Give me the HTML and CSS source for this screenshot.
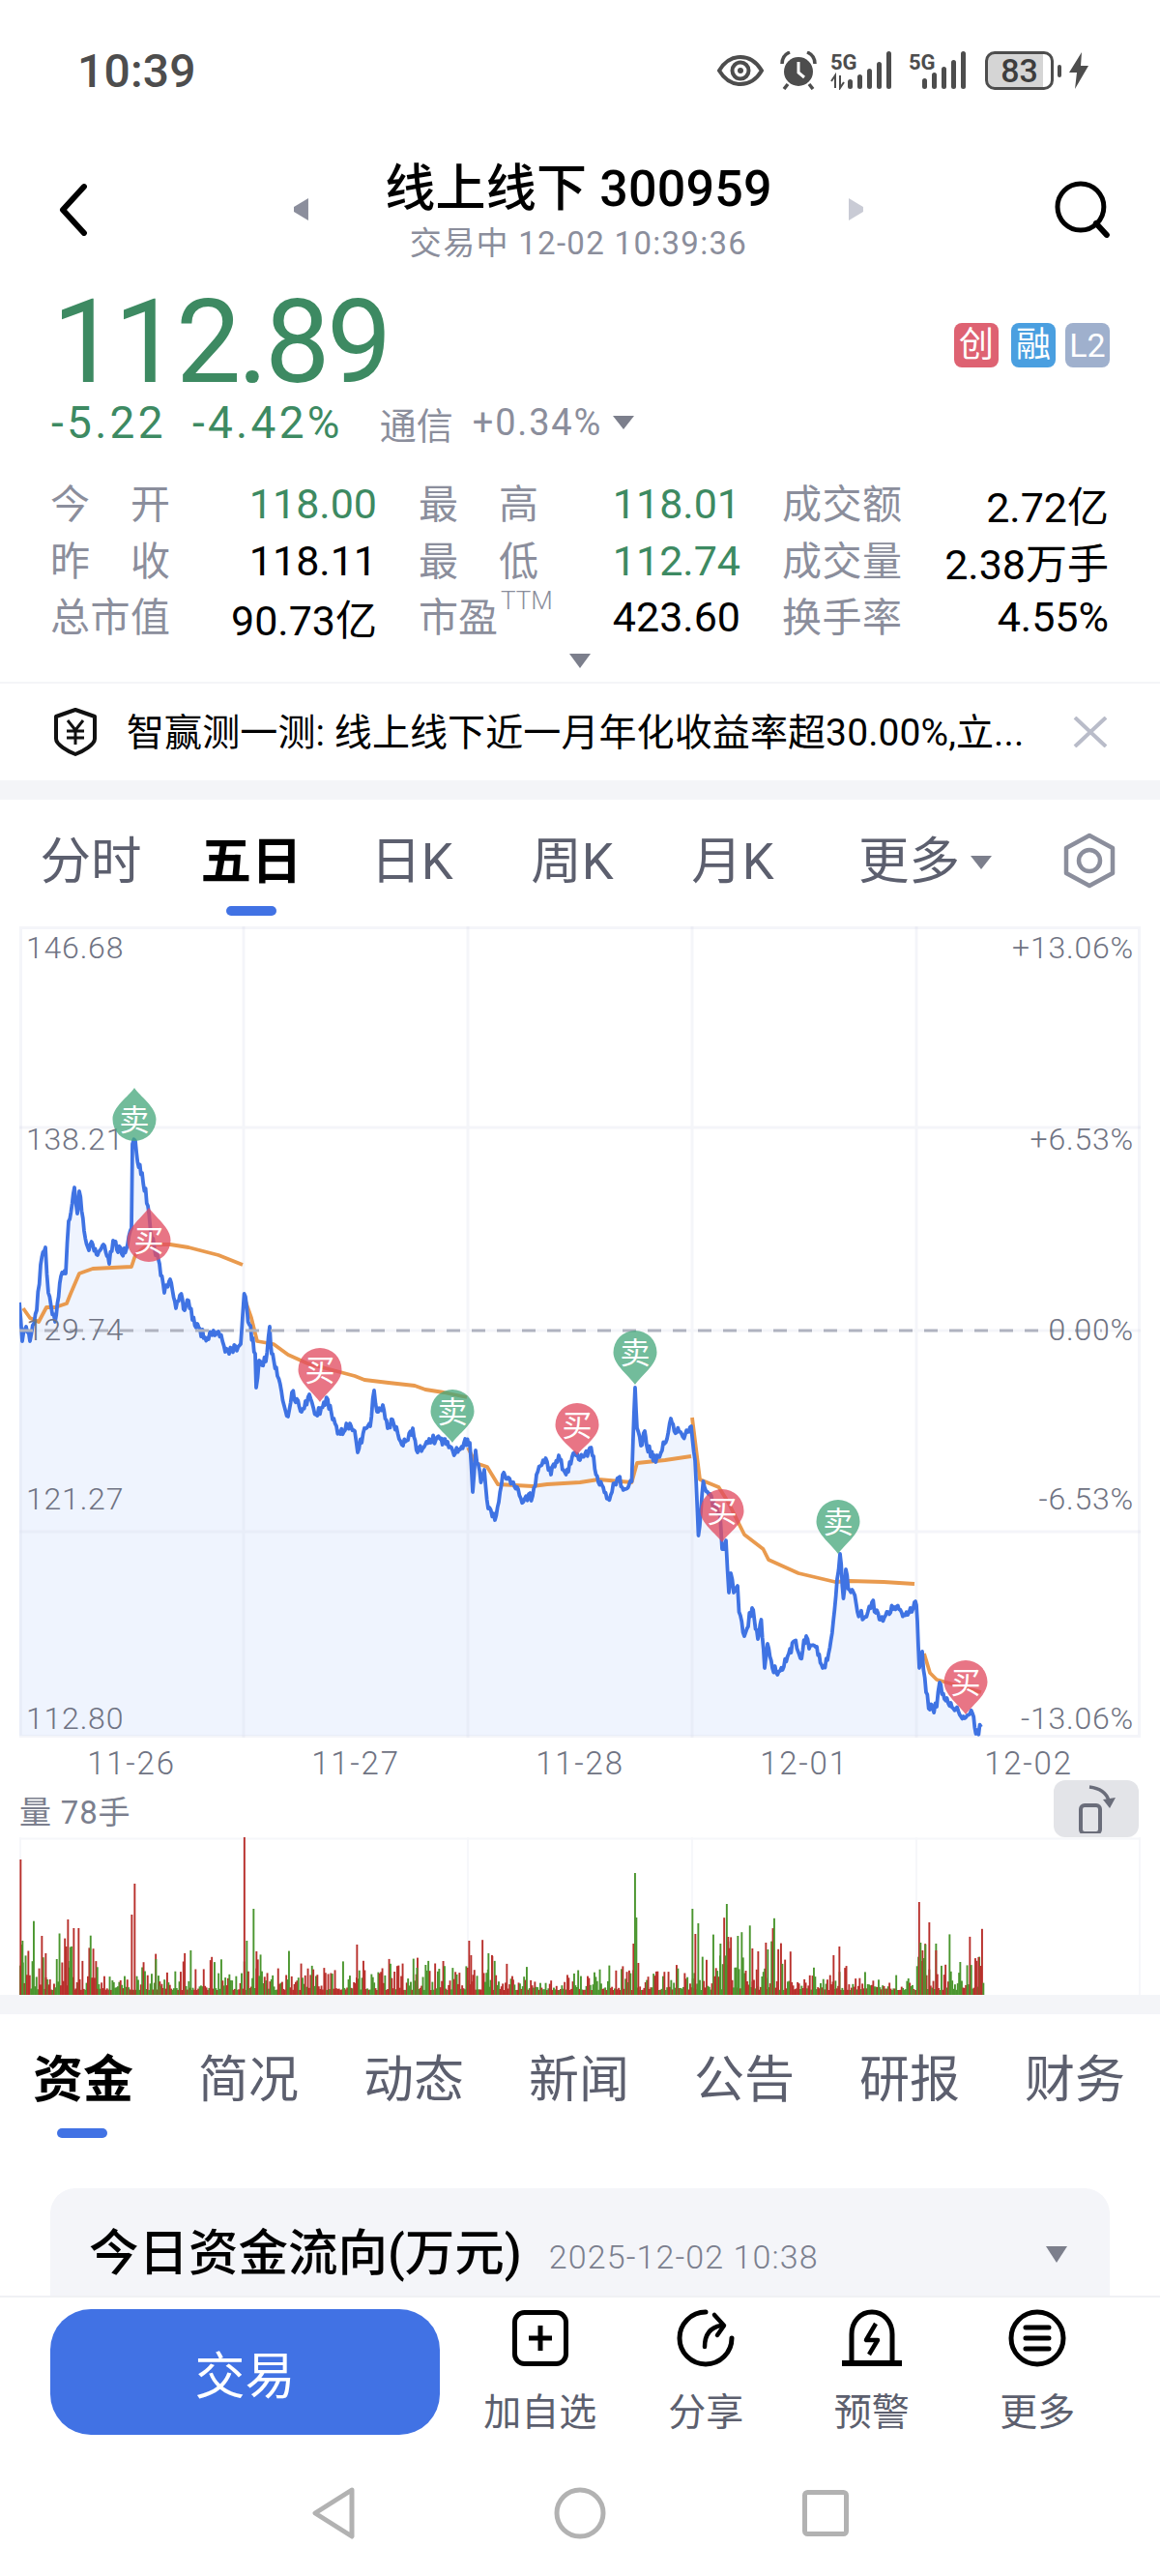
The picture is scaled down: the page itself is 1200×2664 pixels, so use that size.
FILE: index.html
```html
<!DOCTYPE html>
<html lang="zh-CN">
<head>
<meta charset="utf-8">
<title>线上线下 300959</title>
<link rel="stylesheet" href="styles.css">
</head>
<body>
<div class="page">
  <div class="scroll">
    <div class="status">
      <span class="clock">10:39</span>
      <div class="status-icons">
        <svg class="ic-eye" width="48" height="32" viewBox="0 0 48 32"><path d="M2 16C8 6 15 2 24 2s16 4 22 14c-6 10-13 14-22 14S8 26 2 16Z" fill="none" stroke="#4d4d4d" stroke-width="4"/><circle cx="24" cy="16" r="8.5" fill="none" stroke="#4d4d4d" stroke-width="4"/><circle cx="24" cy="16" r="3" fill="#4d4d4d"/></svg>
        <svg class="ic-alarm" width="38" height="40" viewBox="0 0 38 40"><circle cx="19" cy="21" r="15" fill="#4d4d4d"/><path d="M2 13C2 7 5 3 10 1M36 13c0-6-3-10-8-12M8 34l-4 5M30 34l4 5" fill="none" stroke="#4d4d4d" stroke-width="3.5"/><path d="M19 11v11l6 5" fill="none" stroke="#fff" stroke-width="3"/></svg>
        <svg class="ic-sim" width="66" height="40" viewBox="0 0 66 40"><text class="sim-label" x="0" y="19">5G</text><path d="M5 38V25l-4 6M10 25v13l4-6" fill="none" stroke="#4d4d4d" stroke-width="2"/><rect x="18" y="29" width="5" height="10" rx="2.5" class="sim-bar"/><rect x="28" y="24" width="5" height="15" rx="2.5" class="sim-bar"/><rect x="38" y="18" width="5" height="21" rx="2.5" class="sim-bar"/><rect x="48" y="11" width="5" height="28" rx="2.5" class="sim-bar"/><rect x="58" y="0" width="5" height="39" rx="2.5" class="sim-bar"/></svg>
        <svg class="ic-sim2" width="61" height="40" viewBox="0 0 61 40"><text class="sim-label" x="0" y="19">5G</text><rect x="14" y="28" width="5" height="11" rx="2.5" class="sim-bar"/><rect x="24" y="22" width="5" height="17" rx="2.5" class="sim-bar"/><rect x="34" y="16" width="5" height="23" rx="2.5" class="sim-bar"/><rect x="44" y="9" width="5" height="30" rx="2.5" class="sim-bar"/><rect x="54" y="0" width="5" height="39" rx="2.5" class="sim-bar"/></svg>
        <div class="battery"><span class="battery-level">83</span></div>
        <span class="battery-nub"></span>
        <svg class="ic-bolt" width="20" height="38" viewBox="0 0 20 38"><path d="M13 0 0 21h8L6 38 20 14h-8Z" fill="#4d4d4d"/></svg>
      </div>
    </div>

    <header class="head">
      <svg class="ic-back" width="30" height="54" viewBox="0 0 30 54"><path d="M26 3 4 27l22 24" fill="none" stroke="#000" stroke-width="6" stroke-linecap="round" stroke-linejoin="round"/></svg>
      <svg class="step" width="15" height="23" viewBox="0 0 15 23"><path d="M15 0v23L0 14V9Z" fill="#8b8e9c"/></svg>
      <div class="title-block">
        <div class="title">线上线下 300959</div>
        <div class="subtitle">交易中 12-02 10:39:36</div>
      </div>
      <svg class="step" width="15" height="23" viewBox="0 0 15 23"><path d="M0 0v23l15-9V9Z" fill="#c9cbd5"/></svg>
      <svg class="ic-search" width="60" height="60" viewBox="0 0 60 60"><circle cx="28" cy="27" r="24" fill="none" stroke="#000" stroke-width="5"/><path d="m44 44 11 12" fill="none" stroke="#000" stroke-width="6" stroke-linecap="round"/></svg>
    </header>

    <section class="quote">
      <div class="price-row">
        <div class="price">112.89</div>
        <div class="badges">
          <span class="badge badge-red">创</span>
          <span class="badge badge-blue">融</span>
          <span class="badge badge-slate">L2</span>
        </div>
      </div>
      <div class="change-row">
        <span class="chg">-5.22</span>
        <span class="chg">-4.42%</span>
        <span class="sector">通信</span>
        <span class="sector-chg">+0.34%</span>
        <span class="tri tri-sm"></span>
      </div>
      <div class="stats">
        <div class="stat"><span class="k">今 开</span><span class="v up">118.00</span></div>
        <div class="stat"><span class="k">最 高</span><span class="v up">118.01</span></div>
        <div class="stat"><span class="k">成交额</span><span class="v">2.72亿</span></div>
        <div class="stat"><span class="k">昨 收</span><span class="v">118.11</span></div>
        <div class="stat"><span class="k">最 低</span><span class="v up">112.74</span></div>
        <div class="stat"><span class="k">成交量</span><span class="v">2.38万手</span></div>
        <div class="stat"><span class="k">总市值</span><span class="v">90.73亿</span></div>
        <div class="stat"><span class="k k-pe">市盈<sup class="ttm">TTM</sup></span><span class="v">423.60</span></div>
        <div class="stat"><span class="k">换手率</span><span class="v">4.55%</span></div>
      </div>
      <div class="expand"><span class="tri tri-md"></span></div>
    </section>

    <div class="notice">
      <svg class="ic-shield" width="46" height="50" viewBox="0 0 46 50"><path d="M23 2 43 9v23c0 6-12 13-20 16C15 45 3 38 3 32V9Z" fill="none" stroke="#111" stroke-width="4" stroke-linejoin="round"/><path d="m15 13 8 10 8-10M14 24h18M14 31h18M23 23v15" fill="none" stroke="#111" stroke-width="3"/></svg>
      <span class="notice-text">智赢测一测: 线上线下近一月年化收益率超30.00%,立...</span>
      <svg class="ic-close" width="36" height="32" viewBox="0 0 36 32"><path d="M2 1l32 30M34 1 2 31" fill="none" stroke="#b9bcc9" stroke-width="4"/></svg>
    </div>
    <div class="band"></div>

    <nav class="period">
      <div class="period-tabs">
        <div class="ptab">分时</div>
        <div class="ptab on">五日<i class="bar"></i></div>
        <div class="ptab">日K</div>
        <div class="ptab">周K</div>
        <div class="ptab">月K</div>
        <div class="ptab ptab-more">更多<span class="tri tri-sm"></span></div>
      </div>
      <svg class="ic-hex" width="56" height="58" viewBox="0 0 56 58"><path d="M28 3 52 16v26L28 55 4 42V16Z" fill="none" stroke="#8b8e9c" stroke-width="4.5" stroke-linejoin="round"/><circle cx="28" cy="29" r="11" fill="none" stroke="#8b8e9c" stroke-width="4.5"/></svg>
    </nav>

    <svg class="price-chart" width="1160" height="839" viewBox="20 958 1160 839">
      <path id="area" class="area"/>
      <g class="grid">
        <rect x="21.5" y="959.5" width="1157" height="836"/>
        <path d="M252 958V1797M484 958V1797M716 958V1797M948 958V1797M20 1166H1180M20 1376H1180M20 1584H1180"/>
      </g>
      <path id="vwap" class="vwap"/>
      <path id="trace" class="trace"/>
      <path class="prev-close" d="M20 1376H1140"/>
      <g class="axis">
        <text x="27" y="991">146.68</text>
        <text x="27" y="1189">138.21</text>
        <text x="27" y="1386">129.74</text>
        <text x="27" y="1561">121.27</text>
        <text x="27" y="1788">112.80</text>
      </g>
      <g class="axis axis-r">
        <text x="1173" y="991">+13.06%</text>
        <text x="1173" y="1189">+6.53%</text>
        <text x="1173" y="1386">0.00%</text>
        <text x="1173" y="1561">-6.53%</text>
        <text x="1173" y="1788">-13.06%</text>
      </g>
      <g id="marks"></g>
    </svg>

    <div class="dates">
      <span>11-26</span><span>11-27</span><span>11-28</span><span>12-01</span><span>12-02</span>
    </div>

    <div class="vol-head">
      <span class="vol-label">量 78手</span>
      <button class="rotate" type="button" aria-label="横屏">
        <svg width="44" height="50" viewBox="0 0 44 50"><rect x="6" y="21" width="20" height="29" rx="4" fill="none" stroke="#6a6d7a" stroke-width="4"/><path d="M15 2c9 1 17 5 20 14" fill="none" stroke="#6a6d7a" stroke-width="3.5"/><path d="m29 15 7 9 6-11Z" fill="#6a6d7a"/></svg>
      </button>
    </div>
    <svg class="vol-chart" width="1160" height="163" viewBox="20 1900 1160 163">
      <g class="grid grid-thin">
        <path d="M20 1901.5H1180M21 1900V2063M252 1900V2063M484 1900V2063M716 1900V2063M948 1900V2063M1179 1900V2063"/>
      </g>
      <g id="bars"></g>
    </svg>
    <div class="band"></div>

    <nav class="sections">
      <div class="stab on">资金<i class="bar"></i></div>
      <div class="stab">简况</div>
      <div class="stab">动态</div>
      <div class="stab">新闻</div>
      <div class="stab">公告</div>
      <div class="stab">研报</div>
      <div class="stab">财务</div>
    </nav>

    <section class="card">
      <h2 class="card-title">今日资金流向(万元)</h2>
      <span class="card-time">2025-12-02 10:38</span>
      <span class="tri tri-lg"></span>
    </section>
  </div>

  <footer class="dock">
    <button class="trade" type="button">交易</button>
    <div class="tools">
      <div class="tool">
        <svg width="60" height="60" viewBox="0 0 60 60"><rect x="3.5" y="3.5" width="53" height="53" rx="10" fill="none" stroke="#000" stroke-width="5"/><path d="M30 17v26M18 30h24" stroke="#000" stroke-width="5"/></svg>
        <span>加自选</span>
      </div>
      <div class="tool">
        <svg width="60" height="60" viewBox="0 0 60 60"><path d="M30 3A27 27 0 1 0 57 30" fill="none" stroke="#000" stroke-width="5" stroke-linecap="round"/><path d="M29 39c0-12 5-20 17-22" fill="none" stroke="#000" stroke-width="4.5" stroke-linecap="round"/><path d="m39 6 10 11-7 10" fill="none" stroke="#000" stroke-width="4.5" stroke-linecap="round" stroke-linejoin="round"/></svg>
        <span>分享</span>
      </div>
      <div class="tool">
        <svg width="64" height="60" viewBox="0 0 64 60"><path d="M11 55V26C11 13 20 3 32 3s21 10 21 23v29" fill="none" stroke="#000" stroke-width="5"/><path d="M1 56h62" stroke="#000" stroke-width="6"/><path d="M36 15 26 32h12l-9 15" fill="none" stroke="#000" stroke-width="4.5" stroke-linejoin="round"/></svg>
        <span>预警</span>
      </div>
      <div class="tool">
        <svg width="60" height="60" viewBox="0 0 60 60"><circle cx="30" cy="30" r="27" fill="none" stroke="#000" stroke-width="5"/><path d="M18 19h24M18 30h24M18 41h24" stroke="#000" stroke-width="5" stroke-linecap="round"/></svg>
        <span>更多</span>
      </div>
    </div>
  </footer>

  <div class="gesture">
    <svg width="46" height="54" viewBox="0 0 46 54"><path d="M42 3 4 27l38 24Z" fill="none" stroke="#b2b2b2" stroke-width="5" stroke-linejoin="round"/></svg>
    <svg width="54" height="54" viewBox="0 0 54 54"><circle cx="27" cy="27" r="24" fill="none" stroke="#b2b2b2" stroke-width="5"/></svg>
    <svg width="48" height="48" viewBox="0 0 48 48"><rect x="2.5" y="2.5" width="43" height="43" rx="3" fill="none" stroke="#b2b2b2" stroke-width="5"/></svg>
  </div>
</div>
<script src="chart.js"></script>
</body>
</html>
```

FILE: styles.css
```css
* { box-sizing: border-box; }
html, body { margin: 0; padding: 0; background: #fff; }
body { font-family: Roboto, "Noto Sans CJK SC", sans-serif; color: #000; }
i { display: block; }
button { border: 0; padding: 0; font-family: inherit; }

.page { width: 1200px; height: 2664px; display: flex; flex-direction: column; overflow: hidden; background: #fff; }
.scroll { flex: 1; min-height: 0; overflow: hidden; }

/* status bar */
.status { height: 146px; display: flex; align-items: center; justify-content: space-between; padding: 0 74px 0 80px; }
.clock { font-size: 48px; font-weight: 500; color: #4d4d4d; letter-spacing: .2px; }
.status-icons { display: flex; align-items: center; }
.ic-alarm { margin-left: 17px; }
.ic-sim { margin-left: 14px; }
.ic-sim2 { margin-left: 15px; }
.sim-label { font-size: 22px; font-weight: 700; fill: #4d4d4d; font-family: Roboto, sans-serif; }
.sim-bar { fill: #4d4d4d; }
.battery { width: 71px; height: 40px; margin-left: 18px; border: 3px solid #4d4d4d; border-radius: 10px; background: linear-gradient(90deg, #d5d5d5 88%, #fff 88%); display: flex; align-items: center; justify-content: center; }
.battery-level { font-size: 34px; font-weight: 500; color: #3d3d3d; line-height: 1; }
.battery-nub { width: 4px; height: 13px; margin-left: 4px; border-radius: 2px; background: #4d4d4d; }
.ic-bolt { margin-left: 8px; }

/* stock header */
.head { height: 154px; padding: 17px 50px 0 61px; display: flex; align-items: flex-start; }
.ic-back { margin-top: 27px; }
.ic-search { margin-top: 24px; margin-left: 197px; }
.step { margin-top: 42px; }
.head .step:nth-of-type(2) { margin-left: 213px; }
.title-block { width: 561px; text-align: center; }
.title { font-size: 52px; font-weight: 500; line-height: 66px; letter-spacing: .2px; }
.subtitle { font-size: 33px; line-height: 46px; color: #8b8e9c; letter-spacing: 1.3px; }

/* quote summary */
.quote { height: 405px; padding: 0 52px 0 53px; }
.price-row { height: 102px; display: flex; justify-content: space-between; }
.price { font-size: 120px; line-height: 108px; color: #3d8a62; letter-spacing: -3.5px; margin-left: 1px; }
.badges { display: flex; gap: 10px; padding-top: 34px; }
.badge { width: 46px; height: 46px; border-radius: 8px; color: #fff; font-size: 36px; line-height: 46px; text-align: center; }
.badge-red { background: #de6272; margin-right: 3px; }
.badge-blue { background: #4a9fe0; }
.badge-slate { background: #9fb0cd; font-size: 34px; }
.change-row { height: 70px; display: flex; align-items: center; }
.chg { font-size: 46px; color: #3d8a62; letter-spacing: 3.3px; margin-right: 27px; }
.sector { font-size: 38px; color: #8b8e9c; margin-left: 11px; }
.sector-chg { font-size: 38px; color: #8b8e9c; letter-spacing: 1.8px; margin-left: 20px; }
.change-row .tri { margin-left: 11px; }
.tri { display: inline-block; border-style: solid; border-color: #7c7f8c transparent transparent; }
.tri-sm { border-width: 14px 11px 0; }
.tri-md { border-width: 15px 11px 0; }
.tri-lg { border-width: 17px 11px 0; }
.stats { margin-top: 20px; margin-left: -1px; display: grid; grid-template-columns: 338px 333px 338px; column-gap: 43px; grid-auto-rows: 58.5px; }
.stat { display: flex; justify-content: space-between; align-items: center; }
.k { width: 124px; padding-bottom: 6px; font-size: 41px; color: #8b8e9c; text-align-last: justify; white-space: nowrap; }
.k-pe { text-align-last: left; position: relative; }
.ttm { position: absolute; left: 85px; top: 3px; font-size: 26px; font-weight: 300; line-height: 26px; }
.v { font-size: 43px; white-space: nowrap; }
.v.up { color: #3d8a62; }
.expand { margin-top: 8px; text-align: center; line-height: 15px; height: 15px; padding-right: 2px; }

/* advisory strip */
.notice { height: 102px; border-top: 2px solid #f4f5f8; display: flex; align-items: center; padding: 0 54px 0 55px; }
.notice-text { font-size: 39px; margin-left: 30px; padding-bottom: 6px; flex: 1; white-space: nowrap; letter-spacing: .1px; }
.band { height: 20px; background: #f4f5f8; }

/* period tabs */
.period { height: 131px; display: flex; justify-content: space-between; padding: 29px 45px 0 11px; }
.period-tabs { display: grid; grid-template-columns: repeat(5, 166px) auto; }
.ptab { font-size: 52.5px; line-height: 70px; color: #5c5f6e; text-align: center; }
.ptab.on { font-weight: 700; color: #000; }
.bar { width: 52px; height: 10px; margin: 11px auto 0; border-radius: 5px; background: #4172e4; }
.ptab-more { margin-left: 47px; }
.ptab-more .tri { margin-left: 11px; vertical-align: 10px; }
.ic-hex { margin-top: 5px; }

/* price chart */
.price-chart, .vol-chart { display: block; margin-left: 20px; }
.area { fill: #eff4fe; }
.grid { fill: none; stroke: #d8dae8; stroke-opacity: .27; stroke-width: 3; }
.grid-thin { stroke-width: 2; stroke-opacity: .22; }
.vwap { fill: none; stroke: #e99a4e; stroke-width: 3.8; stroke-linejoin: round; }
.trace { fill: none; stroke: #3f73e3; stroke-width: 3.8; stroke-linejoin: round; }
.prev-close { fill: none; stroke: #b0b3c0; stroke-width: 3; stroke-dasharray: 14 12; }
.axis text { font-size: 32px; font-weight: 300; fill: #6f7383; letter-spacing: .8px; }
.axis-r text { text-anchor: end; }
.pin-red { fill: #e24e63; fill-opacity: .78; }
.pin-green { fill: #46a77b; fill-opacity: .76; }
.pin-text { font-size: 31px; fill: #fff; text-anchor: middle; font-family: "Noto Sans CJK SC", sans-serif; }

.dates { height: 53px; margin-left: 20px; display: grid; grid-template-columns: repeat(5, 232px); align-items: center; }
.dates span { text-align: center; font-size: 33px; font-weight: 300; letter-spacing: 1.8px; color: #6f7383; }

/* volume */
.vol-head { height: 50px; display: flex; justify-content: space-between; padding: 0 22px 0 20px; position: relative; }
.vol-label { font-size: 33px; line-height: 50px; color: #7b7f8e; letter-spacing: .8px; }
.rotate { position: absolute; right: 22px; bottom: 0; width: 88px; height: 59px; background: #e3e4e8; border-radius: 12px; display: flex; align-items: center; justify-content: center; }

/* section tabs */
.sections { height: 180px; display: grid; grid-template-columns: repeat(7, 171px); padding: 34px 0 0 34px; }
.stab { font-size: 52px; line-height: 70px; color: #5c5f6e; white-space: nowrap; }
.stab.on { font-weight: 700; color: #000; }
.stab .bar { margin: 14px 0 0 25px; }

/* money flow card */
.card { height: 130px; margin: 0 52px; padding: 34px 44px 0 40px; background: #f4f5f9; border-radius: 26px 26px 0 0; display: flex; align-items: flex-start; }
.card-title { margin: 0; font-size: 51.5px; font-weight: 500; line-height: 68px; white-space: nowrap; }
.card-time { margin: 14px 0 0 28px; font-size: 34px; font-weight: 300; line-height: 46px; letter-spacing: 1.1px; color: #7b7f8e; flex: 1; }
.tri-lg { margin-top: 26px; }

/* bottom dock */
.dock { height: 166px; border-top: 2px solid #f0f1f4; background: #fff; display: flex; padding: 12px 0 0 52px; }
.trade { flex: none; width: 403px; height: 130px; border-radius: 42px; background: #4172e4; color: #fff; font-size: 52px; }
.tools { margin-left: 18px; flex: none; display: grid; grid-template-columns: repeat(4, 171.5px); }
.tool { display: flex; flex-direction: column; align-items: center; font-size: 39px; line-height: 46px; color: #5c5f6e; }
.tool span { margin-top: 24px; }

/* system navigation */
.gesture { height: 124px; display: flex; align-items: center; padding: 0 0 7px 322px; }
.gesture svg:nth-child(2) { margin-left: 205px; }
.gesture svg:nth-child(3) { margin-left: 203px; }
```

FILE: chart.js
```js
// Draws the five-day intraday trace, average line, trade pins and volume bars.
(function () {
  var SVG = 'http://www.w3.org/2000/svg';
  var seed = 20251202;
  function rnd() {
    seed = (seed + 0x6D2B79F5) | 0;
    var t = Math.imul(seed ^ (seed >>> 15), 1 | seed);
    t = (t + Math.imul(t ^ (t >>> 7), 61 | t)) ^ t;
    return ((t ^ (t >>> 14)) >>> 0) / 4294967296;
  }

  var trace = [[20,1347],[23,1387],[27,1372],[31,1387],[38,1355],[42,1308],[47,1290],[50,1337],[57,1367],[63,1320],[68,1317],[71,1263],[77,1228],[80,1255],[82,1232],[87,1273],[92,1293],[96,1287],[101,1298],[107,1287],[113,1307],[117,1283],[126,1297],[132,1287],[136,1270],[137,1183],[140,1180],[143.5,1207],[147,1213],[153,1247],[157,1280],[165,1307],[170,1337],[176,1323],[182,1353],[187.5,1338],[191,1355],[195,1345],[199,1365],[212,1383],[226,1377],[233,1398],[249,1390],[252.6,1338],[258,1370],[264,1400],[265,1435],[268,1407],[275,1408],[279,1372],[281,1400],[287,1423],[298,1465],[302,1440],[312,1460],[320,1442],[327,1463],[339,1447],[344,1468],[352,1483],[362,1472],[367,1480],[370,1502],[377,1477],[383,1475],[387,1438],[390,1460],[396,1453],[401,1477],[406,1468],[417,1495],[427,1477],[432,1502],[444,1488],[455,1488],[471,1503],[480,1492],[486,1492],[489,1543],[492,1500],[497.5,1533],[501,1520],[505,1560],[512,1572],[520,1525],[526,1528],[536,1540],[541.5,1553],[551,1547],[555,1525],[564.5,1508],[570,1525],[578,1505],[585.5,1525],[593,1503],[600,1510],[611.5,1497],[619,1533],[629,1550],[640,1528],[646,1540],[653.5,1532],[657,1435],[659,1477],[663,1495],[667,1480],[669,1495],[678.5,1512],[690,1488],[694,1467],[697.5,1480],[709,1483],[715,1475],[719,1510],[722.5,1588],[727.5,1532],[732,1543],[745,1567],[747,1602],[751,1593],[754,1647],[756,1627],[759,1647],[763,1640],[764.5,1667],[770,1692],[778,1663],[784,1695],[787.5,1675],[791,1725],[794,1700],[799,1725],[807,1728],[816,1710],[822,1697],[828,1715],[834,1692],[837,1705],[845,1703],[851,1725],[856,1717],[862,1677],[866,1633],[869,1607],[872.5,1653],[875,1623],[877.5,1643],[883,1647],[887,1667],[895,1672],[902,1657],[911,1675],[925,1662],[939,1670],[946,1657],[948,1660],[950,1703],[951,1725],[954,1708],[958,1750],[962,1768],[969,1765],[972,1740],[977,1757],[998,1777],[1006,1772],[1009.5,1793],[1015,1786]];

  var vwapDays = [
    [[24,1353],[31,1363],[40,1367],[48,1352],[57,1352],[69,1348],[73,1338],[82,1317],[96,1312],[136,1310],[140,1298],[153,1287],[176,1287],[195,1290],[226,1298],[251,1308]],
    [[253,1343],[260,1363],[266,1387],[283,1390],[298,1401],[318,1410],[367,1423],[377,1427],[402,1430],[429,1433],[440,1437],[459,1440],[483,1445]],
    [[484,1497],[492,1513],[504,1517],[515,1535],[551,1537],[566,1535],[600,1533],[619,1530],[653.5,1533],[659,1513],[688,1510],[715,1506]],
    [[716,1466],[724,1530],[743.5,1538],[753,1553],[770,1587],[789.5,1602],[795,1613],[826,1627],[864,1636],[879,1635],[914,1636],[946,1638]],
    [[956,1710],[962,1730],[969,1737],[1015,1750]]
  ];

  // side, centre x, top of pin, bottom of pin, whether the point faces up
  var pins = [
    ['sell',139,1125,1180,true],
    ['buy',154,1249,1305,true],
    ['buy',331,1394,1450,false],
    ['sell',468,1437,1492,false],
    ['buy',597,1451,1505,false],
    ['sell',657,1376,1432,false],
    ['buy',747,1540,1595,false],
    ['sell',867,1551,1607,false],
    ['buy',999,1717,1773,false]
  ];

  // x, top of bar, colour of the tall volume bars
  var spikes = [[21,1923,'r'],[23,2007,'g'],[43,2002,'r'],[47,2020,'r'],[70,1985,'r'],[72,2028,'g'],[76,1994,'r'],[81,1994,'r'],[136,1980,'r'],[139,1948,'r'],[252.5,1900,'r'],[255,2007,'g'],[262,1974,'g'],[265,2018,'r'],[197,2017,'g'],[161,2026,'g'],[369,2011,'r'],[431,2035,'g'],[485,2007,'r'],[487,2022,'r'],[505,2020,'g'],[509,2023,'r'],[655,2010,'r'],[656.6,1937,'g'],[658,1983,'g'],[660,2030,'r'],[716,1974,'g'],[719,2000,'r'],[722,1989,'g'],[745,2010,'g'],[751.5,1969,'g'],[753,2003,'r'],[763,2002,'g'],[778,2015,'r'],[784,2018,'r'],[792,2009,'r'],[794,2016,'g'],[862,2022,'r'],[868,2013,'r'],[950.5,1967,'r'],[952,2009,'g'],[957,2011,'g'],[961,1988,'r'],[968,2017,'r'],[993,2029,'g'],[1012,2024,'r'],[1014,2033,'r']];

  var load = [[20,100,70],[100,135,16],[135,165,50],[165,480,38],[480,530,52],[530,650,24],[650,716,34],[716,820,70],[820,880,26],[880,945,16],[945,1017,60]];

  function jitterLine(points) {
    var out = [points[0]];
    for (var i = 1; i < points.length; i++) {
      var a = points[i - 1], b = points[i];
      var n = Math.max(1, Math.round((b[0] - a[0]) / 1.3));
      for (var k = 1; k <= n; k++) {
        var f = k / n;
        var y = a[1] + (b[1] - a[1]) * f;
        if (k < n) y += (rnd() - 0.5) * 10;
        out.push([a[0] + (b[0] - a[0]) * f, y]);
      }
    }
    return out;
  }

  function toPath(pts) {
    return pts.map(function (p, i) {
      return (i ? 'L' : 'M') + p[0].toFixed(1) + ' ' + p[1].toFixed(1);
    }).join('');
  }

  var line = jitterLine(trace);
  document.getElementById('trace').setAttribute('d', toPath(line));
  document.getElementById('area').setAttribute('d', toPath(line) + 'L1015 1795L20 1795Z');
  document.getElementById('vwap').setAttribute('d', vwapDays.map(toPath).join(''));

  var marks = document.getElementById('marks');
  pins.forEach(function (p) {
    var cx = p[1], r = 22.5, top = p[2], bot = p[3], up = p[4];
    var cy = up ? bot - r : top + r;
    var tip = up ? top : bot;
    var s = up ? -1 : 1;
    var d = 'M' + cx + ' ' + tip +
      'C' + (cx - 6) + ' ' + (tip - s * 9) + ' ' + (cx - r) + ' ' + (cy + s * 13) + ' ' + (cx - r) + ' ' + cy +
      'A' + r + ' ' + r + ' 0 1 ' + (up ? 0 : 1) + ' ' + (cx + r) + ' ' + cy +
      'C' + (cx + r) + ' ' + (cy + s * 13) + ' ' + (cx + 6) + ' ' + (tip - s * 9) + ' ' + cx + ' ' + tip + 'Z';
    var path = document.createElementNS(SVG, 'path');
    path.setAttribute('d', d);
    path.setAttribute('class', p[0] === 'buy' ? 'pin-red' : 'pin-green');
    marks.appendChild(path);
    var t = document.createElementNS(SVG, 'text');
    t.setAttribute('x', cx);
    t.setAttribute('y', cy + 11);
    t.setAttribute('class', 'pin-text');
    t.textContent = p[0] === 'buy' ? '买' : '卖';
    marks.appendChild(t);
  });

  var RED = '#b8302c', GREEN = '#4b962f';
  var bars = document.getElementById('bars');
  function addBar(x, top, colour) {
    var b = document.createElementNS(SVG, 'rect');
    b.setAttribute('x', x.toFixed(1));
    b.setAttribute('y', top.toFixed(1));
    b.setAttribute('width', '1.9');
    b.setAttribute('height', (2063 - top).toFixed(1));
    b.setAttribute('fill', colour);
    bars.appendChild(b);
  }
  load.forEach(function (seg) {
    for (var x = seg[0]; x < seg[1]; x += 1.4) {
      var v = rnd();
      var h = 5 + seg[2] * v * v * (0.45 + rnd() * 0.75);
      addBar(x, 2063 - h, rnd() < 0.5 ? RED : GREEN);
    }
  });
  spikes.forEach(function (s) {
    addBar(s[0] - 0.6, s[1], s[2] === 'r' ? RED : GREEN);
  });
})();
```
